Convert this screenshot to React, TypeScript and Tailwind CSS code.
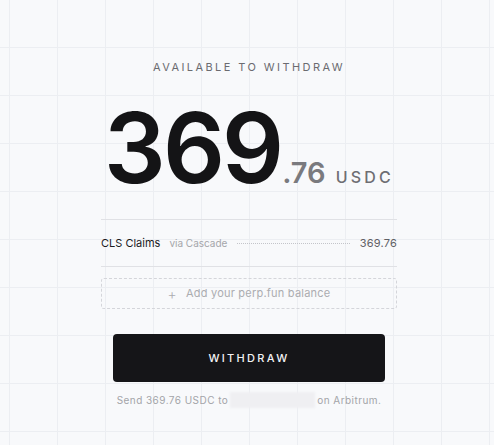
import React from 'react';

const App = () => {
  return (
    <div
      className="min-h-screen w-full bg-[#f8f9fb] bg-[linear-gradient(to_right,#eceef2_1px,transparent_1px),linear-gradient(to_bottom,#eceef2_1px,transparent_1px)] bg-[size:48px_48px] bg-[position:9px_-1px] font-['Inter',sans-serif] text-[#141416]"
    >
      <div className="flex justify-center pl-1 pt-[59px]">
        <div className="flex w-[296px] flex-col items-center">
          <div className="text-[11px] leading-4 tracking-[0.22em] text-[#6b6b70]">
            AVAILABLE TO WITHDRAW
          </div>

          <div className="mt-[24px] flex items-baseline">
            <span className="text-[97px] font-semibold leading-none tracking-[-0.03em] text-[#141416]">369</span>
            <span className="ml-[1px] text-[29px] font-semibold leading-none text-[#7a7a7e]">.76</span>
            <span className="ml-[10px] text-[16px] font-medium leading-none tracking-[0.2em] text-[#6e6e73]">USDC</span>
          </div>

          <div className="mt-[23px] flex h-[48px] w-full items-center border-y border-[#e0e1e5]">
            <span className="text-[11px] text-[#1b1b1e]">CLS Claims</span>
            <span className="ml-[9px] text-[10px] text-[#a5a6aa]">via Cascade</span>
            <span className="mx-[10px] h-0 flex-1 border-t border-dotted border-[#c4c5ca]" />
            <span className="text-[11px] tracking-[0.02em] text-[#5f6065]">369.76</span>
          </div>

          <div className="mt-[11px] flex h-[31px] w-full items-center justify-center gap-[9px] rounded-[3px] border border-dashed border-[#d4d5da] text-[11px] tracking-[0.02em] text-[#abacb0]">
            <span className="text-[14px] font-light leading-none">+</span>
            <span>Add your perp.fun balance</span>
          </div>

          <button className="mt-[25px] flex h-[48px] w-[272px] items-center justify-center rounded-[4px] bg-[#151518] text-[11px] font-medium tracking-[0.21em] text-[#f2f2f4]">
            WITHDRAW
          </button>

          <div className="mt-[10px] flex items-center text-[10px] leading-4 tracking-[0.045em] text-[#a3a4a8]">
            <span>Send 369.76 USDC to</span>
            <span className="mx-[2px] h-4 w-[85px] bg-[#efeff2] blur-[1px]" />
            <span>on Arbitrum.</span>
          </div>
        </div>
      </div>
    </div>
  );
};

export default App;
